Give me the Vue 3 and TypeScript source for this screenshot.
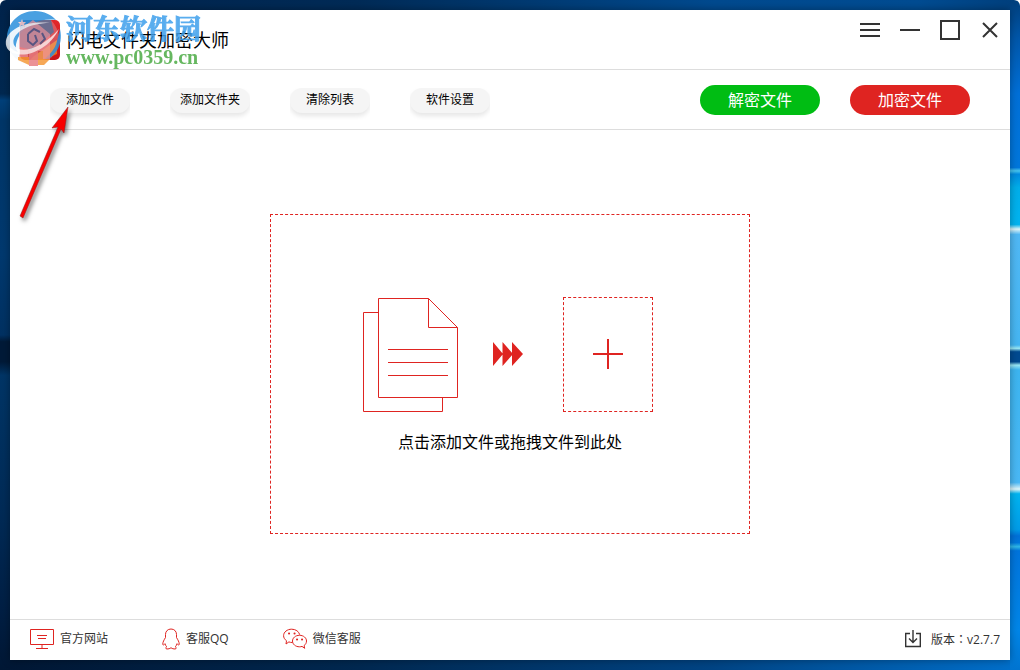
<script setup lang="ts">
const tools: string[] = ['添加文件', '添加文件夹', '清除列表', '软件设置']
</script>

<template>
  <div class="desktop">
    <div class="window">
      <header class="titlebar">
        <svg class="app-icon" viewBox="0 0 40 40" aria-hidden="true">
          <defs>
            <linearGradient id="app-fill" x1="0" y1="0" x2="0" y2="1">
              <stop offset="0" stop-color="#e3282b" />
              <stop offset="1" stop-color="#c81418" />
            </linearGradient>
          </defs>
          <rect width="40" height="40" rx="5" fill="url(#app-fill)" />
          <path d="M0 5a5 5 0 0 1 5-5h26L34 12 12 30 0 27z" fill="#45406b" />
          <path d="M14 36 37 20 37 34 24 40H10z" fill="#ee6a12" />
        </svg>
        <h1>闪电文件夹加密大师</h1>
        <nav class="controls" aria-label="窗口">
          <button type="button" aria-label="菜单">
            <svg viewBox="0 0 20 20"><path d="M0 4h20M0 10h20M0 16h20" /></svg>
          </button>
          <button type="button" aria-label="最小化">
            <svg viewBox="0 0 20 20"><path d="M0 10h20" /></svg>
          </button>
          <button type="button" aria-label="最大化">
            <svg viewBox="0 0 20 20"><path d="M1 1h18v18H1z" /></svg>
          </button>
          <button type="button" aria-label="关闭">
            <svg viewBox="0 0 20 20"><path d="M3 3l14 14M17 3 3 17" /></svg>
          </button>
        </nav>
      </header>

      <div class="toolbar">
        <button v-for="tool in tools" :key="tool" type="button" class="tool">{{ tool }}</button>
        <div class="actions">
          <button type="button" class="action decrypt">解密文件</button>
          <button type="button" class="action encrypt">加密文件</button>
        </div>
      </div>

      <main>
        <button type="button" class="dropzone">
          <span class="art">
            <svg class="docs" viewBox="0 0 96 115" aria-hidden="true">
              <path d="M15.500 15.500H.5v99h79v-14" />
              <path d="M65.500 1.500h-50v99h79v-70zv29h29" />
              <path d="M25 52.500h60M25 65.500h60M25 78.500h60" />
            </svg>
            <svg class="arrows" viewBox="0 0 30 26" aria-hidden="true">
              <path d="M0 1l10 12L0 25zM9.500 1l10.500 12L9.500 25zM19 1l11 12-11 12z" />
            </svg>
            <span class="target">
              <svg viewBox="0 0 30 30" aria-hidden="true"><path d="M0 15h30M15 0v30" /></svg>
            </span>
          </span>
          <span class="hint">点击添加文件或拖拽文件到此处</span>
        </button>
      </main>

      <footer>
        <a href="#site">
          <svg class="wide" viewBox="0 0 24 22" aria-hidden="true">
            <path d="M.5 1.500h23v15H.5zM7 7.500h10M8 10.500h8M12 16.500v4M6 20.500h12" />
          </svg>
          官方网站
        </a>
        <a href="#qq">
          <svg class="narrow" viewBox="0 0 18 22" aria-hidden="true">
            <path d="M9 1C5.500 1 3.500 3.500 3.500 6.500v3C2 12 .8 14 .8 16c0 1.300.8 1.500 2.200-.3.400 1.300.8 2.200 1.600 3-1 .5-1.300 2.300.4 2.300 1.800 0 2.500-.3 4-1.200 1.500.9 2.200 1.200 4 1.200 1.700 0 1.400-1.800.4-2.300.8-.8 1.200-1.700 1.600-3 1.400 1.800 2.200 1.600 2.200.3 0-2-1.200-4-2.700-6.500v-3C14.500 3.500 12.500 1 9 1z" />
          </svg>
          客服QQ
        </a>
        <a href="#wechat">
          <svg class="wide" viewBox="0 0 24 22" aria-hidden="true">
            <path d="M9.500 14.500c-1.500 0-2.500-.1-3.600-.6L3 16l.5-3.300C1.500 11.300.6 9.600.6 7.700.6 4 4.200 1.200 8.700 1.200c4 0 7.200 2.200 8 5.500" />
            <path d="M16.500 7.300c-4 0-7 2.600-7 5.700 0 3.200 3 5.800 7 5.800.9 0 1.700-.1 2.500-.4l2.700 1.900-.6-2.700c1.500-1.100 2.400-2.800 2.400-4.600 0-3.100-3-5.700-7-5.700z" />
            <path class="eyes" d="M6 5.500h.1M11.500 5.500h.1M14 11.500h.1M19 11.500h.1" />
          </svg>
          微信客服
        </a>
        <button type="button" class="version">
          <svg viewBox="0 0 16 18" aria-hidden="true">
            <path d="M5 3.500H.7v13h14.600v-13H11M8 0v12.500M4 8.500l4 4 4-4" />
          </svg>
          <span>版本<span class="colon">：</span>v2.7.7</span>
        </button>
      </footer>
    </div>

    <div class="watermark">
      <svg viewBox="0 0 60 60" aria-hidden="true">
        <circle cx="29" cy="29" r="26" fill="#dceaf6" opacity=".3" />
        <path d="M3 31C2 13 15 1 31 1c9 0 17 4 21 9C38 8 21 14 15 26c-4 8-4 13-1 16-6-2-10-6-11-11z" fill="#2b90dc" />
        <path d="M56 19c4 17-6 30-20 33 8-5 15-12 17-21z" fill="#2b90dc" />
        <path d="M15 20 29 10l17 14v26h-7V41H24v9h-9z" fill="#f09aa0" opacity=".8" />
        <path d="M14 47h11v8l-11-5zM34 49h12l-6 6h-6z" fill="#f59a3a" />
        <path d="M25 40h9v16h-9z" fill="#e88084" />
        <path d="M2 35C0 23 16 10 46 13 22 13 6 25 10 35c5 10 28 4 45-16C46 38 25 47 13 44 7 43 3 40 2 35z" fill="#fff" opacity=".9" />
        <path d="M24 24l6-5 6 3M38 23l3 6-5 5M24 24v7l5 4 4-4-2-6" fill="none" stroke="#5c5985" stroke-width="2" />
        <path d="m18 9 1 3 3 0-2 2 1 3-3-2-3 2 1-3-2-2h3z" fill="#f6cdd0" />
      </svg>
      <div class="mark-text">
        <span class="mark-name">河东软件园</span>
        <span class="mark-url">www.pc0359.cn</span>
      </div>
    </div>

    <svg class="pointer" viewBox="0 0 60 124" aria-hidden="true">
      <path d="M53 4 37 25l6-1L5 113l3 2L46 26l3 4z" />
    </svg>
  </div>
</template>

<style>
html {
  background: #fff;
}
body {
  margin: 0;
}
</style>

<style scoped>
.desktop {
  position: relative;
  display: flex;
  box-sizing: border-box;
  min-height: 100vh;
  padding: 10px;
  border-radius: 6px 6px 0 0;
  font-family: "Open Sans", "Noto Sans CJK SC", sans-serif;
  font-size: 12px;
  line-height: 20px;
  color: #000;
  background:
    linear-gradient(#00234b 0%, #002850 14%, #00407a 15%, #003668 18%, #00396f 38%, #003162 50%, #001a38 51%, #001a38 54%, #003566 56%, #002b57 76%, #001f44 91%, #001734 100%) left / 10px 100% no-repeat,
    linear-gradient(#003f7c 0%, #0058ac 6%, #0070d8 14%, #0077dc 25%, #47c5ee 25.500%, #008be0 26%, #00aeea 28%, #00b4f0 33.500%, #e0f6fa 34.200%, #50b8f5 35%, #46b6f2 51.500%, #9ae8f5 52%, #004a90 52.500%, #004a90 54%, #9ae8f5 54.500%, #3db5f0 55.200%, #4ab8f5 72%, #e0f6fa 73%, #00b4f0 73.700%, #009ce8 79%, #0070d8 80%, #0078dc 81%, #30b8e8 81.600%, #0074dc 82.200%, #0086e8 94%, #0074d0 100%) right / 10px 100% no-repeat,
    linear-gradient(90deg, #00224a 0%, #002b57 35%, #004a8f 70%, #004c92 90%, #003f7c 100%) top / 100% 10px no-repeat,
    linear-gradient(90deg, #001734 0%, #002850 35%, #004484 70%, #0070cc 100%) bottom / 100% 10px no-repeat;
}

.desktop button {
  padding: 0;
  border: 0;
  background: none;
  font: inherit;
  color: inherit;
  cursor: pointer;
}

.desktop svg {
  display: block;
  flex: none;
}

.window {
  display: flex;
  flex: 1;
  flex-direction: column;
  min-width: 0;
  background: #fff;
  box-shadow: 0 0 8px rgba(0, 0, 0, 0.35);
}

.titlebar {
  display: flex;
  align-items: center;
  box-sizing: border-box;
  height: 60px;
  padding: 0 10px;
  border-bottom: 1px solid #ddd;
}

.app-icon {
  width: 40px;
  height: 40px;
}

h1 {
  margin: 0 0 0 7px;
  font-size: 18px;
  font-weight: 400;
  line-height: 24px;
}

.controls {
  display: flex;
  gap: 20px;
  align-self: flex-start;
  margin: 10px 0 0 auto;
}

.controls svg {
  width: 20px;
  height: 20px;
  fill: none;
  stroke: #333;
  stroke-width: 2;
}

.toolbar {
  display: flex;
  align-items: center;
  gap: 40px;
  box-sizing: border-box;
  height: 60px;
  padding: 2px 40px 0;
  border-bottom: 1px solid #ddd;
}

.toolbar .tool {
  width: 80px;
  height: 25px;
  padding-bottom: 1px;
  border-radius: 12px;
  background: #f5f5f5;
  box-shadow: 0 3px 5px rgba(0, 0, 0, 0.1);
  clip-path: inset(0 0 -8px 0);
}

.actions {
  display: flex;
  gap: 30px;
  margin-left: auto;
  padding-bottom: 1px;
}

.actions .action {
  width: 120px;
  height: 30px;
  border-radius: 15px;
  font-size: 16px;
  color: #fff;
}

.actions .decrypt {
  background: #00bd13;
}

.actions .encrypt {
  background: #df2421;
}

main {
  display: grid;
  flex: 1;
  place-items: center;
  padding-bottom: 2px;
}

main .dropzone {
  display: flex;
  flex-direction: column;
  align-items: center;
  justify-content: center;
  gap: 20px;
  box-sizing: border-box;
  width: 480px;
  height: 320px;
  padding-top: 1px;
  border: 1px dashed #df2421;
}

.art {
  display: flex;
  align-items: center;
  padding-right: 4px;
}

.docs {
  width: 96px;
  height: 115px;
  fill: none;
  stroke: #df2421;
}

.arrows {
  width: 30px;
  height: 26px;
  margin: 0 40px 0 34px;
  fill: #df2421;
}

.target {
  display: grid;
  place-items: center;
  box-sizing: border-box;
  width: 90px;
  height: 115px;
  border: 1px dashed #df2421;
}

.target svg {
  width: 30px;
  height: 30px;
  stroke: #df2421;
  stroke-width: 2;
}

.hint {
  font-size: 16px;
}

footer {
  display: flex;
  align-items: center;
  gap: 54px;
  box-sizing: border-box;
  height: 41px;
  padding: 0 10px 2px 20px;
  border-top: 1px solid #ddd;
  color: #333;
}

footer a,
footer .version {
  display: flex;
  align-items: center;
  gap: 6px;
  color: inherit;
  text-decoration: none;
}

footer svg {
  height: 22px;
  fill: none;
  stroke: #df2421;
}

.wide {
  width: 24px;
}

.narrow {
  width: 18px;
}

.eyes {
  stroke-width: 2;
  stroke-linecap: round;
}

footer .version {
  gap: 10px;
  margin-left: auto;
}

footer .version svg {
  width: 16px;
  height: 18px;
  stroke: #333;
  stroke-width: 1.4;
}

.colon {
  font-family: "Noto Sans CJK TC", sans-serif;
}

.watermark {
  position: absolute;
  top: 10px;
  left: 4px;
  display: flex;
  pointer-events: none;
  opacity: 0.85;
}

.watermark svg {
  width: 60px;
  height: 60px;
}

.mark-text {
  display: flex;
  flex-direction: column;
  margin-left: 2px;
}

.mark-name {
  font-family: "Noto Serif CJK SC", "Noto Sans CJK SC", sans-serif;
  font-size: 27px;
  font-weight: 700;
  line-height: 36px;
  color: #3d9fec;
  -webkit-text-stroke: 1px #3d9fec;
}

.mark-url {
  font-family: "Liberation Serif", serif;
  font-size: 20px;
  font-weight: 700;
  line-height: 22px;
  color: #4cab45;
}

.pointer {
  position: absolute;
  top: 103px;
  left: 15px;
  width: 60px;
  height: 124px;
  overflow: visible;
  pointer-events: none;
  fill: #f80000;
  stroke: #8a1c1c;
  stroke-width: 0.5;
  filter: drop-shadow(2px 3px 2px rgba(0, 0, 0, 0.5));
}
</style>
